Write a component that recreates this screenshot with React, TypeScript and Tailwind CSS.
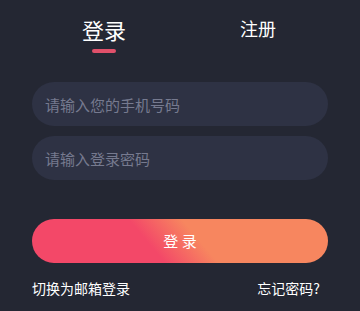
export default function App() {
  return (
    <div
      className="h-[311px] w-[360px] overflow-hidden bg-[#242733] text-white"
      style={{ fontFamily: '"Noto Sans CJK SC", "Noto Sans", sans-serif' }}
    >
      <div className="flex items-start justify-around pl-[25px] pr-[27px] pt-[15px]">
        <button className="flex flex-col items-center">
          <span className="text-[22px] leading-[28px]">登录</span>
          <span className="mt-[6px] h-[4px] w-6 rounded-full bg-[#e0506a]" />
        </button>
        <button className="text-[18px] leading-[26px]">注册</button>
      </div>

      <div className="mt-[29px] flex flex-col gap-[10px] px-8">
        <input
          type="tel"
          placeholder="请输入您的手机号码"
          className="h-11 w-full rounded-full bg-[#2e3244] px-[13px] text-[15px] text-white outline-none placeholder:text-[#767a8f]"
        />
        <input
          type="password"
          placeholder="请输入登录密码"
          className="h-11 w-full rounded-full bg-[#2e3244] px-[13px] text-[15px] text-white outline-none placeholder:text-[#767a8f]"
        />
      </div>

      <div className="mt-[39px] px-8">
        <button className="h-11 w-full rounded-full bg-[linear-gradient(50deg,#f34868_40%,#f7865f_56%)] text-[15px] text-white">
          登 录
        </button>
        <div className="mt-[15px] flex items-center justify-between pr-[8px] text-[14px] leading-5">
          <a href="#">切换为邮箱登录</a>
          <a href="#">忘记密码?</a>
        </div>
      </div>
    </div>
  )
}
